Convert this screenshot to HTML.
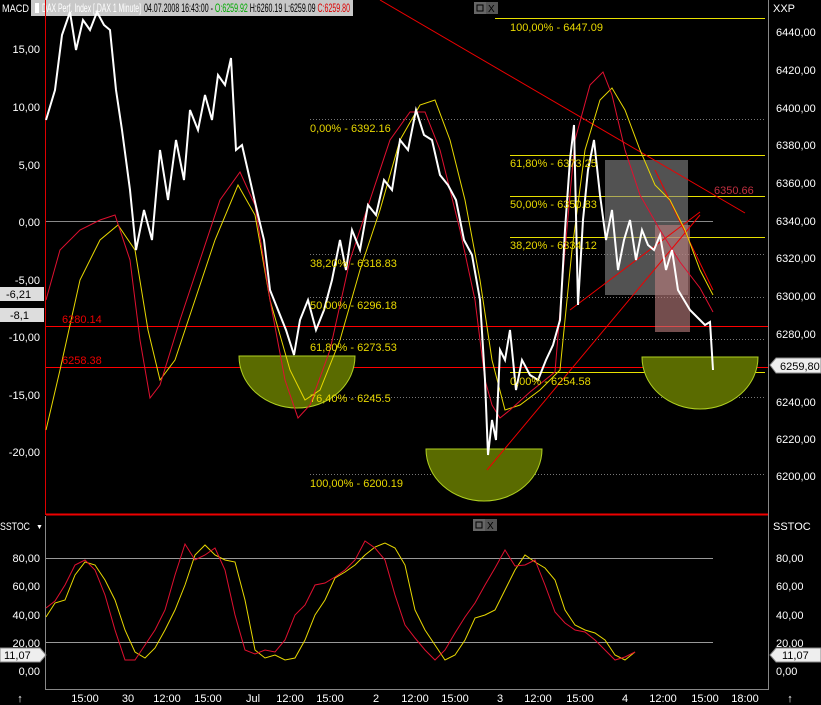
<!DOCTYPE html>
<html><head><meta charset="utf-8"><style>
html,body{margin:0;padding:0;background:#000;width:821px;height:705px;overflow:hidden}
svg{display:block;font-family:"Liberation Sans",sans-serif}
</style></head><body>
<svg width="821" height="705" viewBox="0 0 821 705" xmlns="http://www.w3.org/2000/svg">
<rect width="821" height="705" fill="#000"/>
<!-- header -->
<text x="2" y="12" fill="#fff" font-size="11" textLength="27" lengthAdjust="spacingAndGlyphs">MACD</text><text x="32" y="11" fill="#fff" font-size="7">▼</text>
<rect x="31" y="0" width="322" height="16" fill="#c8c8c8"/>
<rect x="35" y="3" width="4" height="10" fill="#fff"/>
<text x="42" y="12" font-size="12" fill="#fff" textLength="99" lengthAdjust="spacingAndGlyphs">DAX Perf. Index [.DAX  1 Minute]</text>
<text x="144" y="12" font-size="12" fill="#000" textLength="206" lengthAdjust="spacingAndGlyphs">04.07.2008 16:43:00 - <tspan fill="#0a0">O:6259.92</tspan> H:6260.19 L:6259.09 <tspan fill="#d00">C:6259.80</tspan></text>
<rect x="474" y="2" width="12" height="12" fill="#666"/><rect x="477" y="5" width="6" height="6" fill="none" stroke="#000"/>
<rect x="486" y="2" width="12" height="12" fill="#555"/><text x="488" y="12" font-size="10" fill="#000">X</text>
<text x="773" y="12" fill="#fff" font-size="11">XXP</text>
<!-- frames -->
<line x1="45.5" y1="0" x2="45.5" y2="515" stroke="#d00"/>
<line x1="768.5" y1="0" x2="768.5" y2="690" stroke="#888"/>
<line x1="46" y1="514.5" x2="768" y2="514.5" stroke="#e00" stroke-width="2"/>
<line x1="45.5" y1="516" x2="45.5" y2="690" stroke="#888"/>
<line x1="46" y1="689.5" x2="768" y2="689.5" stroke="#888"/>
<!-- left axis -->
<g fill="#fff" font-size="11" text-anchor="end">
<text x="40" y="53">15,00</text><text x="40" y="111">10,00</text><text x="40" y="169">5,00</text><text x="40" y="226">0,00</text><text x="40" y="284">-5,00</text><text x="40" y="341">-10,00</text><text x="40" y="399">-15,00</text><text x="40" y="456">-20,00</text>
</g>
<g fill="#fff" font-size="11">
<text x="776" y="36">6440,00</text><text x="776" y="74">6420,00</text><text x="776" y="112">6400,00</text><text x="776" y="149">6380,00</text><text x="776" y="187">6360,00</text><text x="776" y="225">6340,00</text><text x="776" y="262">6320,00</text><text x="776" y="300">6300,00</text><text x="776" y="338">6280,00</text><text x="776" y="406">6240,00</text><text x="776" y="443">6220,00</text><text x="776" y="480">6200,00</text>
</g>
<!-- grid -->
<line x1="46" y1="221.5" x2="713" y2="221.5" stroke="#888"/>
<g stroke="#777" stroke-dasharray="1,2">
<line x1="310" y1="119.5" x2="765" y2="119.5"/><line x1="310" y1="254.5" x2="765" y2="254.5"/><line x1="310" y1="297.5" x2="765" y2="297.5"/><line x1="310" y1="339.5" x2="765" y2="339.5"/><line x1="310" y1="397.5" x2="765" y2="397.5"/><line x1="310" y1="474.5" x2="765" y2="474.5"/>
</g>
<g stroke="#e8e000">
<line x1="495" y1="18.5" x2="765" y2="18.5"/><line x1="510" y1="155.5" x2="765" y2="155.5"/><line x1="510" y1="196.5" x2="765" y2="196.5"/><line x1="510" y1="237.5" x2="765" y2="237.5"/><line x1="510" y1="372.5" x2="765" y2="372.5"/>
</g>
<line x1="46" y1="326.5" x2="768" y2="326.5" stroke="#f00"/>
<line x1="46" y1="367.5" x2="768" y2="367.5" stroke="#f00"/>
<!-- shapes -->
<path d="M239,356 A58,52 0 0 0 355,356 Z" fill="#5a6b00" stroke="#b0d020"/>
<path d="M426,449 A58,52 0 0 0 542,449 Z" fill="#5a6b00" stroke="#b0d020"/>
<path d="M642,357 A58,52 0 0 0 758,357 Z" fill="#5a6b00" stroke="#b0d020"/>
<rect x="605" y="160" width="83" height="135" fill="#888" fill-opacity="0.6"/>
<rect x="655" y="225" width="35" height="107" fill="#c08080" fill-opacity="0.6"/>
<g stroke="#e00" fill="none">
<line x1="380" y1="0" x2="745" y2="213"/>
<line x1="487" y1="470" x2="700" y2="215"/>
<line x1="570" y1="310" x2="700" y2="212"/>
<line x1="655" y1="170" x2="713" y2="290"/>
</g>
<!-- lines -->
<polyline fill="none" stroke="#e8d800" stroke-width="1" points="46,430 60,370 80,280 100,240 118,225 135,250 148,330 160,380 175,360 195,300 215,240 238,185 255,215 270,300 290,370 305,400 320,390 340,340 360,270 380,210 400,140 420,105 435,100 450,140 465,200 480,280 492,360 505,410 520,405 540,390 560,370 572,250 585,150 600,100 612,88 625,110 640,150 655,185 670,200 685,230 700,270 713,295"/>
<polyline fill="none" stroke="#e01030" stroke-width="1" points="46,300 60,250 80,230 100,220 115,215 130,260 140,340 150,398 160,385 180,320 200,260 220,200 240,172 255,205 270,300 285,380 298,418 310,405 330,350 350,260 370,200 390,140 410,112 425,112 440,150 460,230 475,300 485,380 492,405 500,418 510,410 530,392 555,372 565,250 575,140 590,85 603,72 612,95 625,150 640,195 660,230 680,262 700,288 713,312"/>
<polyline fill="none" stroke="#fff" stroke-width="2" points="46,120 55,90 62,35 70,12 76,50 83,20 90,30 97,12 104,25 110,30 116,90 122,130 130,190 136,250 144,210 152,240 160,150 168,200 176,140 184,180 190,110 198,130 205,95 212,120 218,75 225,85 231,58 236,150 242,145 250,180 258,215 264,240 270,290 278,310 286,330 294,355 300,320 308,300 316,330 324,310 332,280 340,240 346,270 352,230 360,250 368,205 376,215 384,180 392,190 400,140 408,150 416,110 424,135 432,140 440,175 448,185 456,200 464,240 472,255 480,300 485,380 488,455 492,420 496,440 500,350 505,360 510,330 516,390 522,360 530,375 538,380 546,360 553,345 560,320 565,230 570,160 574,125 578,305 583,220 588,170 594,140 600,195 606,240 612,210 618,270 624,240 630,220 636,260 642,230 648,245 654,250 660,235 666,270 672,250 678,290 684,300 690,310 698,318 705,325 710,322 713,370"/>
<!-- labels -->
<g font-size="11" fill="#e8d800">
<text x="510" y="31">100,00% - 6447.09</text>
<text x="310" y="132">0,00% - 6392.16</text>
<text x="510" y="167">61,80% - 6373.25</text>
<text x="510" y="208">50,00% - 6350.83</text>
<text x="510" y="249">38,20% - 6334.12</text>
<text x="310" y="267">38,20% - 6318.83</text>
<text x="310" y="309">50,00% - 6296.18</text>
<text x="310" y="351">61,80% - 6273.53</text>
<text x="510" y="385">0,00% - 6254.58</text>
<text x="310" y="402">76,40% - 6245.5</text>
<text x="310" y="487">100,00% - 6200.19</text>
</g>
<text x="714" y="194" font-size="11" fill="#c03040">6350.66</text>
<text x="62" y="323" font-size="11" fill="#e00">6280.14</text>
<text x="62" y="364" font-size="11" fill="#e00">6258.38</text>
<!-- tags -->
<path d="M0,287 H44 V301 H0 Z" fill="#ddd"/><text x="6" y="298" font-size="11" fill="#000">-6,21</text>
<path d="M0,308 H44 V322 H0 Z" fill="#ddd"/><text x="10" y="319" font-size="11" fill="#000">-8,1</text>
<path d="M770,365 L776,358 H821 V373 H776 Z" fill="#eee" stroke="#888"/><text x="780" y="370" font-size="11" fill="#000">6259,80</text>
<!-- lower panel -->
<text x="0" y="530" fill="#fff" font-size="11" textLength="30" lengthAdjust="spacingAndGlyphs">SSTOC</text><text x="36" y="529" fill="#fff" font-size="7">▼</text>
<rect x="473" y="519" width="12" height="12" fill="#666"/><rect x="476" y="522" width="6" height="6" fill="none" stroke="#000"/>
<rect x="485" y="519" width="12" height="12" fill="#555"/><text x="487" y="529" font-size="10" fill="#000">X</text>
<text x="773" y="530" fill="#fff" font-size="11">SSTOC</text>
<line x1="46" y1="558.5" x2="713" y2="558.5" stroke="#999"/>
<line x1="46" y1="642.5" x2="713" y2="642.5" stroke="#999"/>
<g fill="#fff" font-size="11" text-anchor="end">
<text x="40" y="562">80,00</text><text x="40" y="590">60,00</text><text x="40" y="619">40,00</text><text x="40" y="647">20,00</text><text x="40" y="675">0,00</text>
</g>
<g fill="#fff" font-size="11">
<text x="776" y="562">80,00</text><text x="776" y="590">60,00</text><text x="776" y="619">40,00</text><text x="776" y="647">20,00</text><text x="776" y="675">0,00</text>
</g>
<polyline fill="none" stroke="#e8d800" points="46,617 55,603 65,600 75,575 85,562 95,565 105,580 115,600 125,630 135,652 145,658 155,648 165,630 175,610 185,585 195,555 205,545 215,555 225,560 235,562 245,600 255,650 265,658 275,655 285,660 295,658 305,640 315,615 325,600 335,578 345,572 355,565 365,555 375,547 385,543 395,548 405,565 415,610 425,630 435,645 445,660 455,655 465,640 475,618 485,615 495,610 505,590 515,570 525,555 535,562 545,568 555,580 565,610 575,625 585,630 595,633 605,640 615,655 625,660 635,652"/>
<polyline fill="none" stroke="#e01030" points="46,608 55,601 65,585 75,565 85,560 95,570 105,595 115,630 125,660 135,660 145,645 155,630 165,610 175,575 185,544 195,560 205,555 215,548 225,570 235,615 245,650 255,654 265,650 275,652 285,640 295,615 305,605 315,585 325,583 335,577 345,570 355,560 365,541 375,548 385,560 395,595 405,625 415,638 425,650 435,660 445,650 455,633 465,617 475,603 485,585 495,568 505,550 515,566 525,565 535,560 545,585 555,612 565,623 575,630 585,632 595,640 605,650 615,660 625,657 635,652"/>
<path d="M0,648 H40 L46,655 L40,662 H0 Z" fill="#eee" stroke="#888"/><text x="4" y="659" font-size="11" fill="#000">11,07</text>
<path d="M770,655 L776,648 H821 V662 H776 Z" fill="#eee" stroke="#888"/><text x="782" y="659" font-size="11" fill="#000">11,07</text>
<!-- time axis -->
<g fill="#fff" font-size="11" text-anchor="middle">
<text x="20" y="702">↑</text><text x="85" y="702">15:00</text><text x="128" y="702">30</text><text x="167" y="702">12:00</text><text x="208" y="702">15:00</text><text x="253" y="702">Jul</text><text x="290" y="702">12:00</text><text x="330" y="702">15:00</text><text x="376" y="702">2</text><text x="415" y="702">12:00</text><text x="455" y="702">15:00</text><text x="500" y="702">3</text><text x="538" y="702">12:00</text><text x="580" y="702">15:00</text><text x="625" y="702">4</text><text x="663" y="702">12:00</text><text x="705" y="702">15:00</text><text x="745" y="702">18:00</text><text x="790" y="702">↑</text>
</g>
</svg>
</body></html>
